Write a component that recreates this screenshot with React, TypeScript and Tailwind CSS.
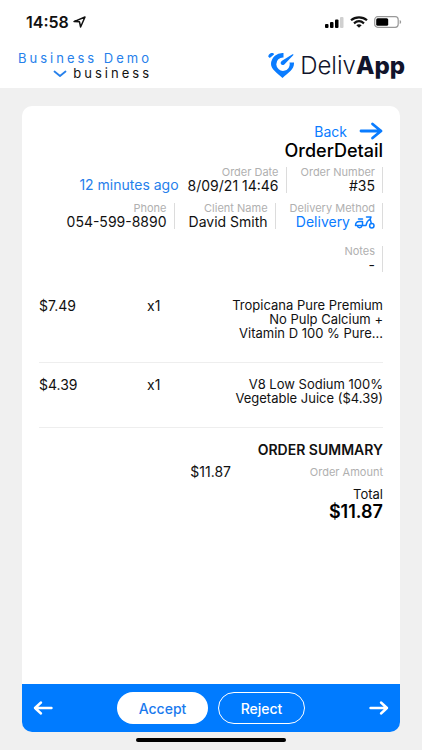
import React from "react";

type FieldProps = { label: string; children: React.ReactNode };

function Field({ label, children }: FieldProps) {
  return (
    <div className="h-[26px] border-r border-[#dcdcdc] pr-[7px] text-right">
      <dt className="text-[11px] leading-[11px] text-[#b0b0b0]">{label}</dt>
      <dd className="flex items-center justify-end text-[14px] leading-4 text-[#111111]">{children}</dd>
    </div>
  );
}

function Scooter() {
  return (
    <svg className="ml-1" width="21" height="13" viewBox="0 0 21 13" fill="none" stroke="currentColor" strokeWidth="1.5" strokeLinecap="round" strokeLinejoin="round" aria-hidden="true">
      <path d="M4.500 3h4M1.500 9.500C1.500 6.500 3 5.500 5.500 5.500H8.500v4M1.500 9.500H12c.3-2.500 1.800-5 4-6.500M12.500 1H17l-.8 2.200M16.200 3.200l1.100 4.200" />
      <path d="M3.500 10c.3 2.400 4 2.400 4.300 0" />
      <circle cx="17.800" cy="9.800" r="2.200" />
    </svg>
  );
}

function LogoMark() {
  return (
    <svg width="28" height="26" viewBox="0 0 28 26" aria-hidden="true">
      <path d="M15.500 1A11.500 11.500 0 0 0 3 12c0 5 5.500 8.500 11.500 14 6-5.500 11.500-8.500 11.500-14.500V10.500h-4.500A6.700 6.700 0 1 1 15.500 5.500z" fill="#0a7cff" />
      <path d="M24.500 2.300L14 8.800c-2.800 2-.6 5.700 2.300 3.600l8.900-9.200c.5-.7 0-1.300-.7-.9z" fill="#0a7cff" />
      <path d="M.3 4.800C0 2.500 3 0 5.500 1.200L6 2.500 1.800 6z" fill="#0a7cff" />
    </svg>
  );
}

function Arrow({ left = false, wide = false }: { left?: boolean; wide?: boolean }) {
  return (
    <svg width={wide ? 24 : 20} height={wide ? 18 : 16} viewBox={wide ? "0 0 24 18" : "0 0 20 16"} fill="none" stroke="currentColor" strokeWidth={wide ? 2.8 : 2.4} strokeLinecap="round" strokeLinejoin="round" aria-hidden="true">
      <path d={wide ? "M2 9h20M13.500 2l8.500 7-8.500 7" : left ? "M18.500 8H2M8 2.500L2 8l6 5.500" : "M1.500 8H18M12 2.500L18 8l-6 5.500"} />
    </svg>
  );
}

const items = [
  { price: "$7.49", quantity: "x1", name: "Tropicana Pure Premium No Pulp Calcium + Vitamin D 100 % Pure..." },
  { price: "$4.39", quantity: "x1", name: "V8 Low Sodium 100% Vegetable Juice ($4.39)" },
];

export default function App() {
  return (
    <div className="flex min-h-screen flex-col bg-[#f0f0f0] font-['Inter',sans-serif] text-[#111111]">
      <header className="h-[88px] bg-white">
        <div className="flex h-11 items-center justify-between pr-5 pl-[26px]">
          <div className="flex items-center gap-1 text-[16px] leading-5 font-semibold">
            14:58
            <svg width="13" height="12" viewBox="0 0 13 12" fill="none" stroke="currentColor" strokeWidth="1.500" strokeLinejoin="round" aria-hidden="true">
              <path d="M1 5.600L12 1 7.600 11 6.500 5.800z" />
            </svg>
          </div>
          <div className="flex items-center gap-[6px]">
            <svg width="19" height="11" viewBox="0 0 19 11" aria-hidden="true">
              <rect x="0" y="7" width="3.500" height="4" rx="1" />
              <rect x="5" y="5" width="3.500" height="6" rx="1" />
              <rect x="10" y="2.500" width="3.500" height="8.500" rx="1" />
              <rect x="15" y="0" width="3.500" height="11" rx="1" fill="#d0d0d0" />
            </svg>
            <svg width="18" height="12" viewBox="0 0 18 12" fill="none" stroke="currentColor" strokeWidth="2.200" aria-hidden="true">
              <path d="M1 4.300c4.500-4 11.500-4 16 0M4 7.300c3-2.500 7-2.500 10 0" />
              <path d="M6.300 9.300c1.600-1.300 3.800-1.300 5.400 0L9 11.800z" fill="currentColor" stroke="none" />
            </svg>
            <svg width="28" height="12" viewBox="0 0 28 12" aria-hidden="true">
              <rect x=".7" y=".7" width="23.500" height="10.600" rx="3" fill="none" stroke="#999999" strokeWidth="1.200" />
              <rect x="2.200" y="2.200" width="12" height="7.600" rx="1.500" />
              <path d="M25.700 4v4c2-.8 2-3.200 0-4z" fill="#999999" />
            </svg>
          </div>
        </div>
        <div className="flex h-11 items-start justify-between pr-[17px] pl-[18px]">
          <button type="button" className="mt-[7px] flex flex-col items-end text-[13px] leading-[15px] tracking-[3px]">
            <span className="text-[#2680eb]">Business Demo</span>
            <span className="flex items-center gap-[6px]">
              <svg width="14" height="8" viewBox="0 0 14 8" fill="none" stroke="#2680eb" strokeWidth="1.800" strokeLinecap="round" strokeLinejoin="round" aria-hidden="true">
                <path d="M1.500 1.500L7 6l5.500-4.500" />
              </svg>
              business
            </span>
          </button>
          <div className="mt-2 flex items-start gap-1 text-[24px] leading-7 text-[#11142b]">
            <LogoMark />
            <span><span className="font-light">Deliv</span><span className="font-extrabold">App</span></span>
          </div>
        </div>
      </header>

      <main className="mx-[22px] mt-[18px] flex flex-1 flex-col overflow-hidden rounded-[10px] bg-white">
        <div className="flex-1 px-[17px] pt-[15px]">
          <div className="flex flex-col items-end">
            <button type="button" className="flex h-5 items-center gap-3 text-[14px] text-[#0a7cff]">
              Back
              <Arrow wide />
            </button>
            <h1 className="text-[18px] leading-5 font-medium text-black">OrderDetail</h1>
          </div>

          <dl className="mt-[6px] flex flex-col">
            <div className="flex items-end justify-end gap-[14px]">
              <div className="flex items-end gap-[9px]">
                <span className="text-[14px] leading-4 text-[#2680eb]">12 minutes ago</span>
                <Field label="Order Date">8/09/21 14:46</Field>
              </div>
              <Field label="Order Number">#35</Field>
            </div>
            <div className="mt-[10px] flex justify-end gap-[14px]">
              <Field label="Phone">054-599-8890</Field>
              <Field label="Client Name">David Smith</Field>
              <Field label="Delivery Method">
                <span className="flex items-center text-[#0a7cff]">Delivery<Scooter /></span>
              </Field>
            </div>
            <div className="mt-[17px] flex justify-end">
              <Field label="Notes">-</Field>
            </div>
          </dl>

          <table className="mt-3 w-full table-fixed border-collapse text-[14px] leading-4">
            <tbody>
              {items.map((item) => (
                <tr key={item.name} className="border-b border-[#eeeeee] align-top">
                  <td className="w-[108px] pt-[14px] pb-[22px]">{item.price}</td>
                  <td className="pt-[14px] pb-[22px]">{item.quantity}</td>
                  <td className="w-[156px] pt-[14px] pb-[22px] text-right text-[13px] leading-[14px]">{item.name}</td>
                </tr>
              ))}
            </tbody>
          </table>

          <section className="flex flex-col items-end pt-3">
            <h2 className="text-[14px] leading-5 font-semibold">ORDER SUMMARY</h2>
            <div className="mt-[2px] flex w-full justify-end text-[14px] leading-5">
              <span>$11.87</span>
              <span className="w-[152px] text-right text-[11px] text-[#b0b0b0]">Order Amount</span>
            </div>
            <span className="mt-[3px] text-[13px] leading-[18px]">Total</span>
            <strong className="text-[18px] leading-[18px] font-semibold text-black">$11.87</strong>
          </section>
        </div>

        <footer className="flex h-12 items-center justify-between bg-[#007bff] px-[11px] text-[14px] font-medium text-white">
          <button type="button" aria-label="Previous order"><Arrow left /></button>
          <div className="flex gap-[10px]">
            <button type="button" className="h-8 w-[91px] rounded-full bg-white text-[#1a7aee]">Accept</button>
            <button type="button" className="h-8 w-[87px] rounded-full border border-white">Reject</button>
          </div>
          <button type="button" aria-label="Next order"><Arrow /></button>
        </footer>
      </main>
      <div className="mx-auto mt-[6px] mb-2 h-1 w-[150px] rounded-full bg-black" />
    </div>
  );
}
